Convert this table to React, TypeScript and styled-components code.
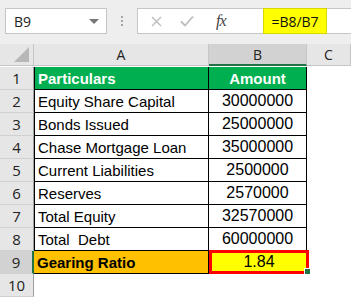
import React from 'react';
import styled, { createGlobalStyle } from 'styled-components';

const GlobalStyle = createGlobalStyle`
  html, body {
    margin: 0;
    padding: 0;
    background: #ffffff;
    overflow: hidden;
  }
  body {
    font-family: 'Liberation Sans', Arial, sans-serif;
  }
`;

const Page = styled.div`
  width: 351px;
  height: 297px;
  overflow: hidden;
  background: #ffffff;
`;

const FormulaBar = styled.div`
  height: 44px;
  box-sizing: border-box;
  padding: 8px 0 0 5px;
  display: flex;
  align-items: flex-start;
  background: #eeeeee;
`;

const NameBox = styled.div`
  width: 102px;
  height: 26px;
  box-sizing: border-box;
  border: 1px solid #c6c6c6;
  background: #fff;
  display: flex;
  align-items: center;
  justify-content: space-between;
  padding: 0 7px 0 8px;
  font-family: 'Open Sans', 'Liberation Sans', sans-serif;
  font-size: 14px;
  color: #222;
`;

const Caret = styled.span`
  width: 0;
  height: 0;
  border-left: 5px solid transparent;
  border-right: 5px solid transparent;
  border-top: 5px solid #777;
`;

const Grip = styled.div`
  width: 30px;
  height: 26px;
  display: flex;
  flex-direction: column;
  align-items: center;
  justify-content: center;
  gap: 2px;
`;

const Dot = styled.span`
  width: 2px;
  height: 2px;
  background: #a6a6a6;
`;

const FormulaBox = styled.div`
  flex: 1;
  height: 26px;
  box-sizing: border-box;
  border: 1px solid #c6c6c6;
  border-right: none;
  background: #fff;
  display: flex;
  align-items: stretch;
`;

const Buttons = styled.div`
  width: 112px;
  display: flex;
  align-items: center;
  padding-left: 13px;
  gap: 18px;
`;

const FxLabel = styled.span`
  font-family: 'Liberation Serif', 'Times New Roman', serif;
  font-style: italic;
  font-size: 16px;
  color: #444;
  margin-left: 4px;
  letter-spacing: -1px;
`;

const Highlight = styled.div`
  width: 64px;
  margin: -1px 0;
  box-sizing: border-box;
  border: 1px solid #d6d600;
  background: #ffff00;
  display: flex;
  align-items: center;
  justify-content: center;
  font-family: 'Open Sans', 'Liberation Sans', sans-serif;
  font-size: 14px;
  color: #111;
`;

const Sheet = styled.div`
  display: grid;
  grid-template-columns: 34px 175px 98px 1fr;
  grid-auto-rows: 23px;
`;

const Corner = styled.div`
  height: 22px;
  box-sizing: border-box;
  background: #e6e6e6;
  border-right: 1px solid #c6c6c6;
  border-bottom: 1px solid #c6c6c6;
  position: relative;
`;

const CornerMark = styled.svg`
  position: absolute;
  right: 4px;
  bottom: 3px;
`;

const ColHead = styled.div<{ $selected?: boolean }>`
  height: 22px;
  box-sizing: border-box;
  display: flex;
  align-items: center;
  justify-content: center;
  background: ${(p) => (p.$selected ? '#d2d2d2' : '#e6e6e6')};
  border-right: 1px solid #c6c6c6;
  border-bottom: ${(p) => (p.$selected ? '2px solid #217346' : '1px solid #c6c6c6')};
  font-family: 'Open Sans', 'Liberation Sans', sans-serif;
  font-size: 14px;
  color: #222;
`;

const RowHead = styled.div<{ $selected?: boolean }>`
  box-sizing: border-box;
  display: flex;
  align-items: center;
  justify-content: center;
  background: ${(p) => (p.$selected ? '#d2d2d2' : '#e6e6e6')};
  border-bottom: 1px solid #d0d0d0;
  border-right: ${(p) => (p.$selected ? '2px solid #217346' : '1px solid #9e9e9e')};
  font-family: 'Open Sans', 'Liberation Sans', sans-serif;
  font-size: 15px;
  color: #222;
`;

type Tone = 'plain' | 'green' | 'orange';

const fills: Record<Tone, string> = {
  plain: '#ffffff',
  green: '#00b050',
  orange: '#ffc000',
};

const Cell = styled.div<{ $tone?: Tone; $center?: boolean; $bold?: boolean; $first?: boolean }>`
  box-sizing: border-box;
  display: flex;
  align-items: center;
  justify-content: ${(p) => (p.$center ? 'center' : 'flex-start')};
  padding-left: ${(p) => (p.$center ? '0' : '3px')};
  background: ${(p) => fills[p.$tone || 'plain']};
  color: ${(p) => (p.$tone === 'green' ? '#ffffff' : '#000000')};
  font-weight: ${(p) => (p.$bold ? 700 : 400)};
  border-left: ${(p) => (p.$first ? '1px solid #000' : 'none')};
  border-right: 1px solid #000;
  border-bottom: 1px solid #000;
  font-size: ${(p) => (p.$center && !p.$bold ? '16px' : '15px')};
  white-space: pre;
`;

const ResultCell = styled.div`
  position: relative;
  box-sizing: border-box;
  display: flex;
  align-items: center;
  justify-content: center;
  background: #ffff00;
  border: 3px solid #ff0000;
  margin: -1px -2px 0 0;
  font-size: 16px;
  color: #000;
`;

const Handle = styled.span`
  position: absolute;
  right: -5px;
  bottom: -4px;
  width: 5px;
  height: 5px;
  background: #217346;
  border: 1px solid #fff;
`;

const Blank = styled.div`
  background: #fff;
`;

const rows: { n: number; label: string; amount: string }[] = [
  { n: 2, label: 'Equity Share Capital', amount: '30000000' },
  { n: 3, label: 'Bonds Issued', amount: '25000000' },
  { n: 4, label: 'Chase Mortgage Loan', amount: '35000000' },
  { n: 5, label: 'Current Liabilities', amount: '2500000' },
  { n: 6, label: 'Reserves', amount: '2570000' },
  { n: 7, label: 'Total Equity', amount: '32570000' },
  { n: 8, label: 'Total  Debt', amount: '60000000' },
];

const App = () => {
  return (
    <Page>
      <GlobalStyle />
      <FormulaBar>
        <NameBox>
          B9
          <Caret />
        </NameBox>
        <Grip>
          <Dot />
          <Dot />
          <Dot />
        </Grip>
        <FormulaBox>
          <Buttons>
            <svg width="11" height="11" viewBox="0 0 11 11">
              <path d="M1 1L10 10M10 1L1 10" stroke="#bdbdbd" strokeWidth="1.4" fill="none" />
            </svg>
            <svg width="14" height="12" viewBox="0 0 14 12">
              <path d="M1 6.5L5 10.5L13 1.5" stroke="#bdbdbd" strokeWidth="1.8" fill="none" />
            </svg>
            <FxLabel>fx</FxLabel>
          </Buttons>
          <Highlight>=B8/B7</Highlight>
        </FormulaBox>
      </FormulaBar>
      <Sheet>
        <Corner>
          <CornerMark width="15" height="15" viewBox="0 0 15 15">
            <polygon points="15,0 15,15 0,15" fill="#b7b7b7" />
          </CornerMark>
        </Corner>
        <ColHead>A</ColHead>
        <ColHead $selected>B</ColHead>
        <ColHead>C</ColHead>

        <RowHead>1</RowHead>
        <Cell $tone="green" $bold $first>
          Particulars
        </Cell>
        <Cell $tone="green" $bold $center>
          Amount
        </Cell>
        <Blank />

        {rows.map((r) => (
          <React.Fragment key={r.n}>
            <RowHead>{r.n}</RowHead>
            <Cell $first>{r.label}</Cell>
            <Cell $center>{r.amount}</Cell>
            <Blank />
          </React.Fragment>
        ))}

        <RowHead $selected>9</RowHead>
        <Cell $tone="orange" $bold>
          Gearing Ratio
        </Cell>
        <ResultCell>
          1.84
          <Handle />
        </ResultCell>
        <Blank />

        <RowHead>10</RowHead>
        <Blank />
        <Blank />
        <Blank />
      </Sheet>
    </Page>
  );
};

export default App;
